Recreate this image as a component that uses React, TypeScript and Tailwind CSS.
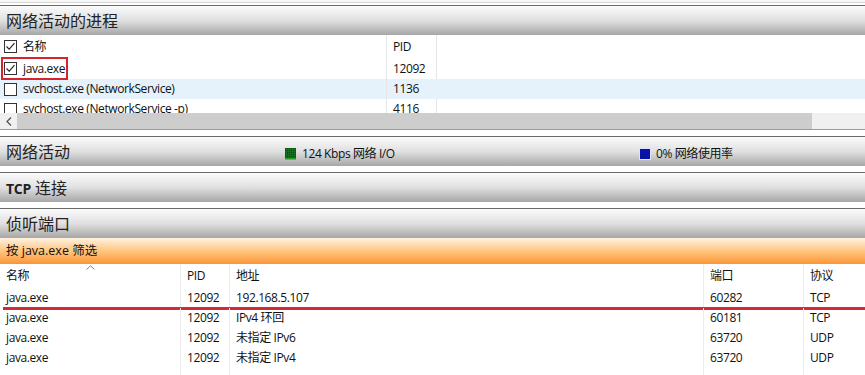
import React from "react";

const FONT = '"Open Sans", "Noto Sans CJK SC", sans-serif';

function Check({ checked }: { checked: boolean }) {
  return (
    <svg width="13" height="13" viewBox="0 0 13 13" className="shrink-0">
      <rect x="0.5" y="0.5" width="12" height="12" fill="#fff" stroke="#333" />
      {checked && <path d="M2.5 6.5 L5.2 9.2 L10.5 3.2" fill="none" stroke="#222" strokeWidth="1.1" />}
    </svg>
  );
}

function SectionHeader({ children, right }: { children: React.ReactNode; right?: React.ReactNode }) {
  return (
    <div className="border-t border-[#6a6a6a] h-[30px] bg-gradient-to-b from-[#fbfbfb] via-[#e0e0e0] to-[#a7a7a7] flex items-center pl-[6px] relative">
      <div className="text-[16px] text-[#222] leading-none tracking-normal">{children}</div>
      {right}
    </div>
  );
}

function GreenIcon() {
  return (
    <svg width="11" height="12" viewBox="0 0 11 12" className="shrink-0">
      <rect x="0" y="0" width="11" height="12" fill="#0b4f10" />
      {Array.from({ length: 5 }).map((_, i) => (
        <line key={"h" + i} x1="0" x2="11" y1={1.5 + i * 2} y2={1.5 + i * 2} stroke="#1d7a22" strokeWidth="0.6" />
      ))}
      {Array.from({ length: 5 }).map((_, i) => (
        <line key={"v" + i} y1="0" y2="12" x1={1.5 + i * 2} x2={1.5 + i * 2} stroke="#1d7a22" strokeWidth="0.6" />
      ))}
      <rect x="0" y="10.5" width="11" height="1.5" fill="#3ad43a" />
    </svg>
  );
}

function BlueIcon() {
  return (
    <svg width="12" height="12" viewBox="0 0 12 12" className="shrink-0">
      <rect x="0.5" y="0.5" width="11" height="11" fill="#0b12a8" stroke="#dfe3ff" />
    </svg>
  );
}

const bottomRows = [
  ["java.exe", "12092", "192.168.5.107", "60282", "TCP"],
  ["java.exe", "12092", "IPv4 环回", "60181", "TCP"],
  ["java.exe", "12092", "未指定 IPv6", "63720", "UDP"],
  ["java.exe", "12092", "未指定 IPv4", "63720", "UDP"],
];

export default function App() {
  return (
    <div
      className="w-[865px] h-[375px] bg-white overflow-hidden text-[12px] text-[#111] tracking-[-0.4px]"
      style={{ fontFamily: FONT }}
    >
      {/* top strip */}
      <div className="h-[2px] bg-[#f7f7f7]" />
      <div className="h-px bg-[#d6d6d6]" />
      <div className="h-[2px] bg-white" />

      <SectionHeader>网络活动的进程</SectionHeader>

      {/* process table */}
      <div className="relative h-[78px] overflow-hidden">
        <div className="grid grid-cols-[386px_50px_1fr] h-[23px] items-center">
          <div className="flex items-center gap-[6px] pl-[4px] h-full">
            <Check checked />
            <span>名称</span>
          </div>
          <div className="border-l border-[#e6e6e6] h-full flex items-center pl-[6px]">PID</div>
          <div className="border-l border-[#e6e6e6] h-full" />
        </div>
        <div className="grid grid-cols-[386px_50px_1fr] h-[21px] items-center">
          <div className="flex items-center gap-[6px] pl-[4px] h-full">
            <Check checked />
            <span>java.exe</span>
          </div>
          <div className="border-l border-[#e6e6e6] h-full flex items-center pl-[6px]">12092</div>
          <div className="border-l border-[#e6e6e6] h-full" />
        </div>
        <div className="grid grid-cols-[386px_50px_1fr] h-[20px] items-center bg-[#e5f1fb]">
          <div className="flex items-center gap-[6px] pl-[4px] h-full">
            <Check checked={false} />
            <span>svchost.exe (NetworkService)</span>
          </div>
          <div className="border-l border-[#e6e6e6] h-full flex items-center pl-[6px]">1136</div>
          <div className="h-full" />
        </div>
        <div className="grid grid-cols-[386px_50px_1fr] h-[20px] items-center">
          <div className="flex items-center gap-[6px] pl-[4px] h-full">
            <Check checked={false} />
            <span>svchost.exe (NetworkService -p)</span>
          </div>
          <div className="border-l border-[#e6e6e6] h-full flex items-center pl-[6px]">4116</div>
          <div className="border-l border-[#e6e6e6] h-full" />
        </div>
        {/* red annotation box */}
        <div className="absolute left-[1px] top-[22px] w-[67px] h-[23px] border-[2.5px] border-[#d8222e]" />
      </div>

      {/* horizontal scrollbar */}
      <div className="h-[16px] flex bg-[#f0f0f0]">
        <div className="w-[17px] flex items-center justify-center">
          <svg width="6" height="9" viewBox="0 0 6 9">
            <path d="M5 0.5 L1 4.5 L5 8.5" fill="none" stroke="#555" strokeWidth="1.3" />
          </svg>
        </div>
        <div className="w-[795px] bg-[#cdcdcd]" />
        <div className="flex-1" />
      </div>
      <div className="h-px bg-[#9b9b9b]" />
      <div className="h-[6px] bg-white" />

      <SectionHeader
        right={
          <>
            <div className="absolute left-[285px] top-[8px] flex items-center gap-[6px] text-[12px] text-[#111] tracking-[-0.4px]">
              <GreenIcon />
              <span>124 Kbps 网络 I/O</span>
            </div>
            <div className="absolute left-[639px] top-[8px] flex items-center gap-[5px] text-[12px] text-[#111] tracking-[-0.4px]">
              <BlueIcon />
              <span>0% 网络使用率</span>
            </div>
          </>
        }
      >
        网络活动
      </SectionHeader>
      <div className="h-[6px] bg-white" />

      <SectionHeader>
        <span className="font-bold text-[14px] tracking-[-0.3px]">TCP</span> 连接
      </SectionHeader>
      <div className="h-[6px] bg-white" />

      <SectionHeader>侦听端口</SectionHeader>

      {/* filter bar */}
      <div className="h-[26px] bg-gradient-to-b from-[#fff2df] via-[#ffc57e] to-[#fb9531] flex items-center pl-[6px] text-[12.5px] text-[#111] tracking-normal">
        按 java.exe 筛选
      </div>

      {/* listening ports table */}
      <div className="grid grid-cols-[180px_49px_474px_100px_1fr] h-[24px]">
        <div className="relative flex items-center pl-[6px]">
          名称
          <svg width="9" height="5" viewBox="0 0 9 5" className="absolute left-[86px] top-[1px]">
            <path d="M0.5 4.5 L4.5 0.8 L8.5 4.5" fill="none" stroke="#888" strokeWidth="1" />
          </svg>
        </div>
        <div className="border-l border-[#ececec] flex items-center pl-[6px]">PID</div>
        <div className="border-l border-[#ececec] flex items-center pl-[6px]">地址</div>
        <div className="border-l border-[#ececec] flex items-center pl-[6px]">端口</div>
        <div className="border-l border-[#ececec] flex items-center pl-[6px]">协议</div>
      </div>
      {bottomRows.map((r, i) => (
        <div key={i} className="relative grid grid-cols-[180px_49px_474px_100px_1fr] h-[20px]">
          <div className="flex items-center pl-[6px]">{r[0]}</div>
          <div className="border-l border-[#ececec] flex items-center pl-[6px]">{r[1]}</div>
          <div className="border-l border-[#ececec] flex items-center pl-[6px]">{r[2]}</div>
          <div className="border-l border-[#ececec] flex items-center pl-[6px]">{r[3]}</div>
          <div className="border-l border-[#ececec] flex items-center pl-[6px]">{r[4]}</div>
          {i === 0 && <div className="absolute left-[3px] right-0 bottom-[-2px] h-[3px] bg-[#d42a35]" />}
        </div>
      ))}
      <div className="grid grid-cols-[180px_49px_474px_100px_1fr] h-[20px]">
        <div />
        <div className="border-l border-[#ececec]" />
        <div className="border-l border-[#ececec]" />
        <div className="border-l border-[#ececec]" />
        <div className="border-l border-[#ececec]" />
      </div>
    </div>
  );
}
